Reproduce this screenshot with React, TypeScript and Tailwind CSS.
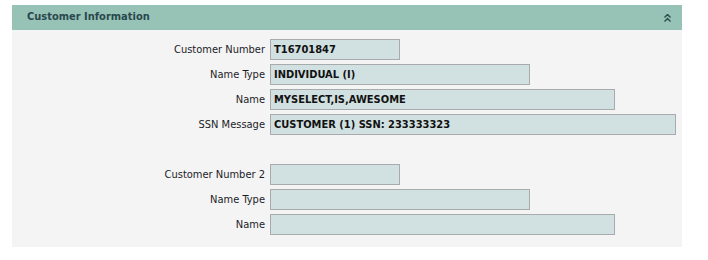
import React from "react";

const font = { fontFamily: '"DejaVu Sans Condensed", "DejaVu Sans", sans-serif' };

function Row({ label, value, w }: { label: string; value?: string; w: string }) {
  return (
    <div className="flex items-center h-[21px] gap-[5px]">
      <div className="w-[253px] text-right text-[11px] text-[#1c1c28] leading-none">{label}</div>
      <div className={`${w} h-[21px] bg-[#d1e0e0] border border-[#a9aaac] flex items-center pl-[3px] text-[11px] font-bold text-[#111] leading-none whitespace-nowrap overflow-hidden`}>
        {value}
      </div>
    </div>
  );
}

export default function App() {
  return (
    <div className="w-[708px] h-[260px] bg-white pt-[5px] pl-[12px]" style={font}>
      <div className="w-[670px]">
        <div className="h-[25px] bg-[#97c3b6] flex items-center justify-between pl-[15px] pr-[11px]">
          <span className="text-[11px] font-bold text-[#2a484e]">Customer Information</span>
          <svg width="7" height="8" viewBox="0 0 7 8" className="text-[#2e4f4f]">
            <path d="M0.5 3.5 L3.5 0.5 L6.5 3.5 M0.5 7.5 L3.5 4.5 L6.5 7.5" fill="none" stroke="currentColor" strokeWidth="1.5" />
          </svg>
        </div>
        <div className="bg-[#f4f4f4] pt-[9px] pb-[12px] flex flex-col">
          <div className="flex flex-col gap-[4px]">
            <Row label="Customer Number" value="T16701847" w="w-[130px]" />
            <Row label="Name Type" value="INDIVIDUAL (I)" w="w-[260px]" />
            <Row label="Name" value="MYSELECT,IS,AWESOME" w="w-[345px]" />
            <Row label="SSN Message" value="CUSTOMER (1) SSN: 233333323" w="w-[406px]" />
          </div>
          <div className="flex flex-col gap-[4px] mt-[29px]">
            <Row label="Customer Number 2" w="w-[130px]" />
            <Row label="Name Type" w="w-[260px]" />
            <Row label="Name" w="w-[345px]" />
          </div>
        </div>
      </div>
    </div>
  );
}
